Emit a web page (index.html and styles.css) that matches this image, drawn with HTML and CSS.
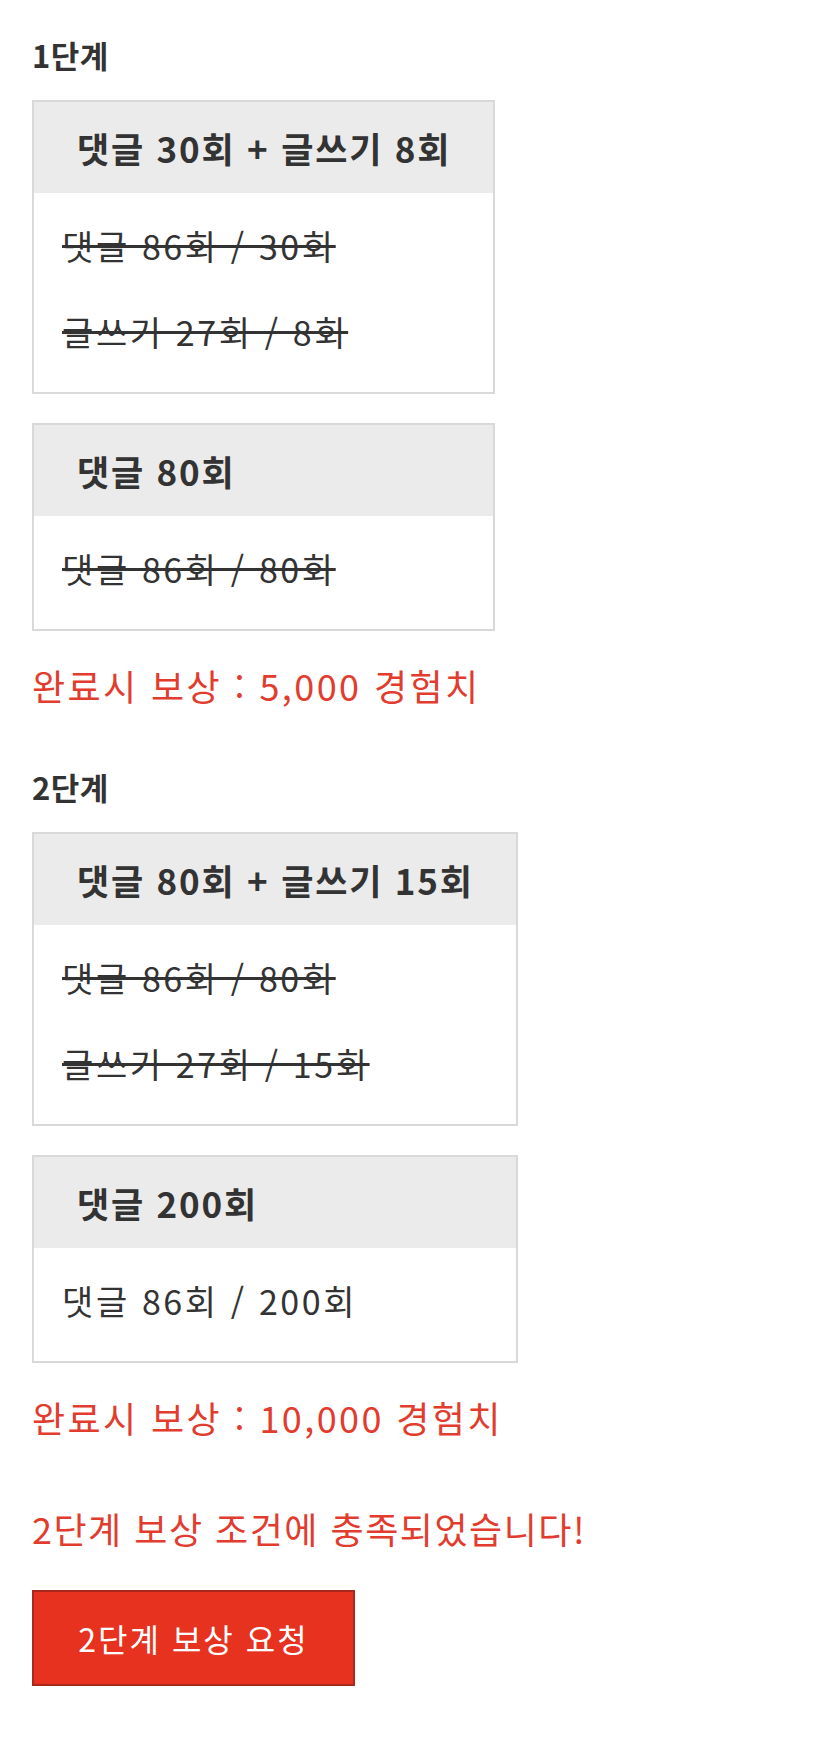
FILE: index.html
```html
<!DOCTYPE html>
<html lang="ko">
<head>
    <meta charset="UTF-8">
    <meta name="viewport" content="width=device-width, initial-scale=1.0">
    <title>단계별 보상</title>
    <link rel="stylesheet" href="styles.css">
</head>
<body>
    <div class="page">
        <div class="stage">
            <h3 class="stage-title">1단계</h3>
            <div class="mission-list">
                <div class="mission">
                    <div class="mission-head">댓글 30회 + 글쓰기 8회</div>
                    <div class="mission-body">
                        <p class="done">댓글 86회 / 30회</p>
                        <p class="done">글쓰기 27회 / 8회</p>
                    </div>
                </div>
                <div class="mission">
                    <div class="mission-head">댓글 80회</div>
                    <div class="mission-body">
                        <p class="done">댓글 86회 / 80회</p>
                    </div>
                </div>
            </div>
            <p class="reward">완료시 보상 : 5,000 경험치</p>
        </div>

        <div class="stage">
            <h3 class="stage-title">2단계</h3>
            <div class="mission-list">
                <div class="mission">
                    <div class="mission-head">댓글 80회 + 글쓰기 15회</div>
                    <div class="mission-body">
                        <p class="done">댓글 86회 / 80회</p>
                        <p class="done">글쓰기 27회 / 15회</p>
                    </div>
                </div>
                <div class="mission">
                    <div class="mission-head">댓글 200회</div>
                    <div class="mission-body">
                        <p>댓글 86회 / 200회</p>
                    </div>
                </div>
            </div>
            <p class="reward">완료시 보상 : 10,000 경험치</p>
        </div>

        <p class="notice">2단계 보상 조건에 충족되었습니다!</p>
        <button class="button">2단계 보상 요청</button>
    </div>
</body>
</html>
```

FILE: styles.css
```css
body {
    margin: 0;
    background-color: #ffffff;
    color: #333333;
    font-family: "Noto Sans CJK KR", "Noto Sans", sans-serif;
}
.page {
    padding: 35px 0 40px 32px;
}
.stage {
    margin-bottom: 57px;
}
.stage-title {
    margin: 0 0 25px;
    font-size: 31px;
    font-weight: bold;
    line-height: 40px;
    letter-spacing: 0.5px;
}
.mission-list {
    display: grid;
    width: max-content;
    row-gap: 29px;
}
.mission {
    border: 2px solid #d9d9d9;
}
.mission-head {
    padding: 0 42px 0 43px;
    background-color: #ebebeb;
    font-size: 35px;
    font-weight: bold;
    line-height: 91px;
    letter-spacing: 1.8px;
    white-space: nowrap;
}
.mission-body {
    padding: 27px 28px 34px;
}
.mission-body p {
    margin: 0;
    font-size: 34px;
    line-height: 52px;
    letter-spacing: 2.6px;
}
.mission-body p + p {
    margin-top: 34px;
}
.done {
    text-decoration: line-through;
}
.reward {
    margin: 29px 0 0;
    color: #e23c2e;
    font-size: 36px;
    line-height: 50px;
    letter-spacing: 2.4px;
}
.stage + .stage {
    margin-bottom: 61px;
}
.notice {
    margin: 0 0 37px;
    color: #e23c2e;
    font-size: 36px;
    line-height: 50px;
    letter-spacing: 1.5px;
}
.button {
    width: 323px;
    height: 96px;
    background-color: #e6321f;
    color: #ffffff;
    border: 2px solid #ab291c;
    font-family: inherit;
    font-size: 32px;
    letter-spacing: 2px;
    cursor: pointer;
}
```
